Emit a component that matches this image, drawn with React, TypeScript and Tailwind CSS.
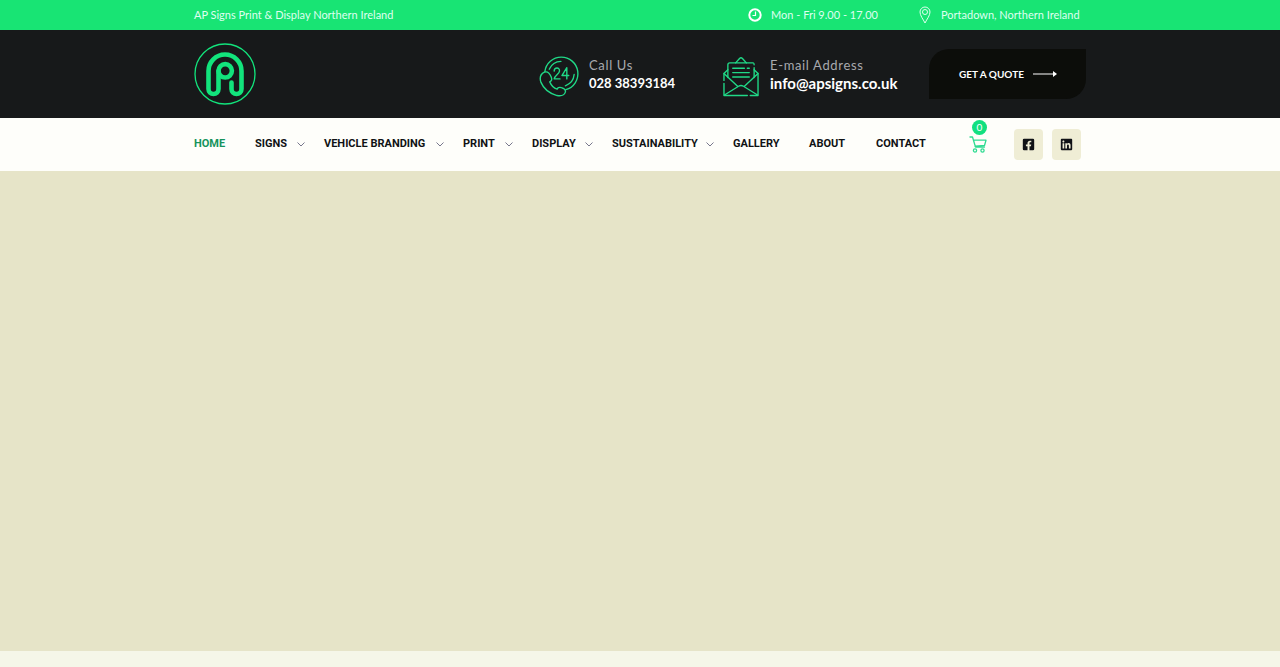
import { FaFacebookSquare, FaLinkedin } from "react-icons/fa";

const navItems = [
  { label: "HOME", width: "w-[61px]", menu: false, active: true },
  { label: "SIGNS", width: "w-[69px]", menu: true },
  { label: "VEHICLE BRANDING", width: "w-[139px]", menu: true },
  { label: "PRINT", width: "w-[69px]", menu: true },
  { label: "DISPLAY", width: "w-[80px]", menu: true },
  { label: "SUSTAINABILITY", width: "w-[121px]", menu: true },
  { label: "GALLERY", width: "w-[76px]", menu: false },
  { label: "ABOUT", width: "w-[67px]", menu: false },
  { label: "CONTACT", width: "w-[93px]", menu: false },
];

function Logo() {
  return (
    <svg viewBox="0 0 62 62" className="h-[62px] w-[62px]" fill="none" stroke="#12e47c" aria-hidden="true">
      <circle cx="31" cy="31" r="30" strokeWidth="1.3" />
      <g strokeWidth="4.6" strokeLinecap="round">
        <path d="M24.500 28v18a5 5 0 0 1-10 0V28a16.500 16.500 0 0 1 33 0v18a5 5 0 0 1-10 0V39.500" />
        <circle cx="31.200" cy="27.800" r="6.700" />
      </g>
    </svg>
  );
}

function ClockIcon() {
  return (
    <svg viewBox="0 0 14 14" className="size-[14px]" fill="none" stroke="white" aria-hidden="true">
      <circle cx="7" cy="7" r="5.700" strokeWidth="2" />
      <path d="M7.500 3.500v4h-3" strokeWidth="1.200" />
    </svg>
  );
}

function PhoneIcon() {
  return (
    <svg viewBox="0 0 42 42" className="h-[41px] w-[41px]" fill="none" stroke="#20d987" strokeWidth="1.4" strokeLinecap="round" strokeLinejoin="round" aria-hidden="true">
      <path d="M6 16A17 17 0 1 1 27.500 34.500" />
      <path d="M10.500 13.500a13.500 13.500 0 0 1 12-8M36 19a13.500 13.500 0 0 1-9 11.500" />
      <path d="M5.500 16.500c-4 2-5 6-3.500 10.500C5 34 11 38.500 18.500 40.500c4 .7 7.500-.5 8.500-3.500.5-2-1-3.500-4-4.500-2.500-1-4 0-4.500 1.500-3-1-6-4-7.500-7.500 2-.8 2.500-2.500 1.500-5-1.500-4-4-6-7-5Z" />
      <path d="M15.500 15.500c.3-4.500 6-4 5.500 0-.3 3-5 4.500-5.500 8h6M28.500 23.500V12l-5 8h7" />
    </svg>
  );
}

function MailIcon() {
  return (
    <svg viewBox="0 0 37 42" className="h-[41px] w-[36px]" fill="none" stroke="#20d987" strokeWidth="1.4" strokeLinecap="round" strokeLinejoin="round" aria-hidden="true">
      <path d="M1 25v-7l4-4M1 28v12.500h24M28 40.500h8V18l-4-4" />
      <path d="M5 22V9q0-2 2-2h24q1 0 1 2M32 12v10" />
      <path d="M13 7l4-4.500q1.500-1.500 3 0l4 4.500M10 12.500h12M25 12.500h2M10 17h17M10 21.500h17" />
      <path d="M1 18l14 13M36 18L22 31M1.500 40L16 31q2.500-1.500 5 0l14.500 9" />
    </svg>
  );
}

function PinIcon() {
  return (
    <svg viewBox="0 0 12 18" className="h-[18px] w-[12px]" fill="none" stroke="currentColor" strokeWidth="1" aria-hidden="true">
      <path d="M6 17C4 13 1 9.500 1 6a5 5 0 0 1 10 0c0 3.500-3 7-5 11Z" />
      <circle cx="6" cy="6" r="2.500" />
    </svg>
  );
}

function Chevron() {
  return (
    <svg viewBox="0 0 8 5" className="h-[5px] w-[8px] shrink-0" fill="none" stroke="#77778c" strokeWidth="1" aria-hidden="true">
      <path d="M.5.5L4 4 7.500.5" />
    </svg>
  );
}

function CartIcon() {
  return (
    <svg viewBox="0 0 18 17" className="h-[17px] w-[18px]" fill="none" stroke="#2edb91" strokeWidth="1.3" strokeLinecap="round" strokeLinejoin="round" aria-hidden="true">
      <path d="M1 1h2.500l3 10h9M4.500 4.200H17L15.500 9.500l-9.500.7" />
      <circle cx="6" cy="14.500" r="1.600" />
      <circle cx="13.500" cy="14.500" r="1.600" />
    </svg>
  );
}

const container = "mx-auto flex w-full max-w-[892px] items-center";

export default function App() {
  return (
    <div className="flex min-h-screen flex-col bg-[#f5f6e8] font-['Lato','Liberation_Sans',sans-serif]">
      <div className="bg-[#18e474] text-[11px] text-[#dffff0]">
        <div className={`${container} h-[30px]`}>
          <p>AP Signs Print &amp; Display Northern Ireland</p>
          <p className="ml-auto flex w-[171px] items-center gap-[9px]">
            <ClockIcon />
            Mon - Fri 9.00 - 17.00
          </p>
          <p className="flex w-[167px] items-center gap-[10px]">
            <PinIcon />
            Portadown, Northern Ireland
          </p>
        </div>
      </div>

      <header className="bg-[#17191a]">
        <div className={`${container} h-[88px]`}>
          <a href="#home" aria-label="AP Signs home">
            <Logo />
          </a>
          <div className="ml-auto flex w-[184px] items-center gap-[9px] pt-[4px]">
            <PhoneIcon />
            <div className="pb-[4px]">
              <p className="text-[13px] leading-[18px] tracking-wider text-[#a7a9ae]">Call Us</p>
              <a href="tel:02838393184" className="block text-[13px] leading-[18px] font-bold text-white">028 38393184</a>
            </div>
          </div>
          <div className="flex w-[206px] items-center gap-[11px] pt-[4px]">
            <MailIcon />
            <div className="pb-[4px]">
              <p className="text-[13px] leading-[18px] tracking-wider text-[#a7a9ae]">E-mail Address</p>
              <a href="mailto:info@apsigns.co.uk" className="block text-[15px] leading-[18px] font-bold text-white">info@apsigns.co.uk</a>
            </div>
          </div>
          <a href="#quote" className="flex h-[50px] w-[157px] items-center gap-[9px] rounded-tl-[20px] rounded-br-[20px] bg-[#0c0d0a] pl-[30px] text-[10px] font-bold whitespace-nowrap text-white">
            GET A QUOTE
            <svg viewBox="0 0 24 8" className="h-[8px] w-[24px]" aria-hidden="true">
              <path d="M0 4h21" stroke="white" strokeWidth="1" />
              <path d="M20 1l4 3-4 3Z" fill="white" />
            </svg>
          </a>
        </div>
      </header>

      <div className="bg-[#fefefa]">
        <div className={`${container} h-[53px]`}>
          <nav aria-label="Main">
            <ul className="flex font-['Roboto','Liberation_Sans',sans-serif] text-[11px] font-bold text-[#101214]">
              {navItems.map((item) => (
                <li key={item.label} className={`${item.width} shrink-0`}>
                  <a href={`#${item.label.toLowerCase().replace(" ", "-")}`} className={`flex items-center justify-between whitespace-nowrap ${item.active ? "text-[#16935c]" : ""} ${item.menu ? "pr-[19px]" : ""}`}>
                    {item.label}
                    {item.menu && <Chevron />}
                  </a>
                </li>
              ))}
            </ul>
          </nav>
          <a href="#cart" aria-label="Cart, 0 items" className="relative block">
            <CartIcon />
            <span className="absolute -top-[16px] left-[3px] flex size-[15px] items-center justify-center rounded-full bg-[#12e080] text-[10px] text-white">0</span>
          </a>
          <div className="ml-auto flex gap-[9px] pr-[5px] text-[#101216]">
            <a href="#facebook" aria-label="Facebook" className="flex h-[31px] w-[29px] items-center justify-center rounded-[4px] bg-[#efedd5]">
              <FaFacebookSquare className="size-[13px]" />
            </a>
            <a href="#linkedin" aria-label="LinkedIn" className="flex h-[31px] w-[29px] items-center justify-center rounded-[4px] bg-[#efedd5]">
              <FaLinkedin className="size-[13px]" />
            </a>
          </div>
        </div>
      </div>

      <main className="mb-[16px] grow bg-[#e6e4c8]" />
    </div>
  );
}
